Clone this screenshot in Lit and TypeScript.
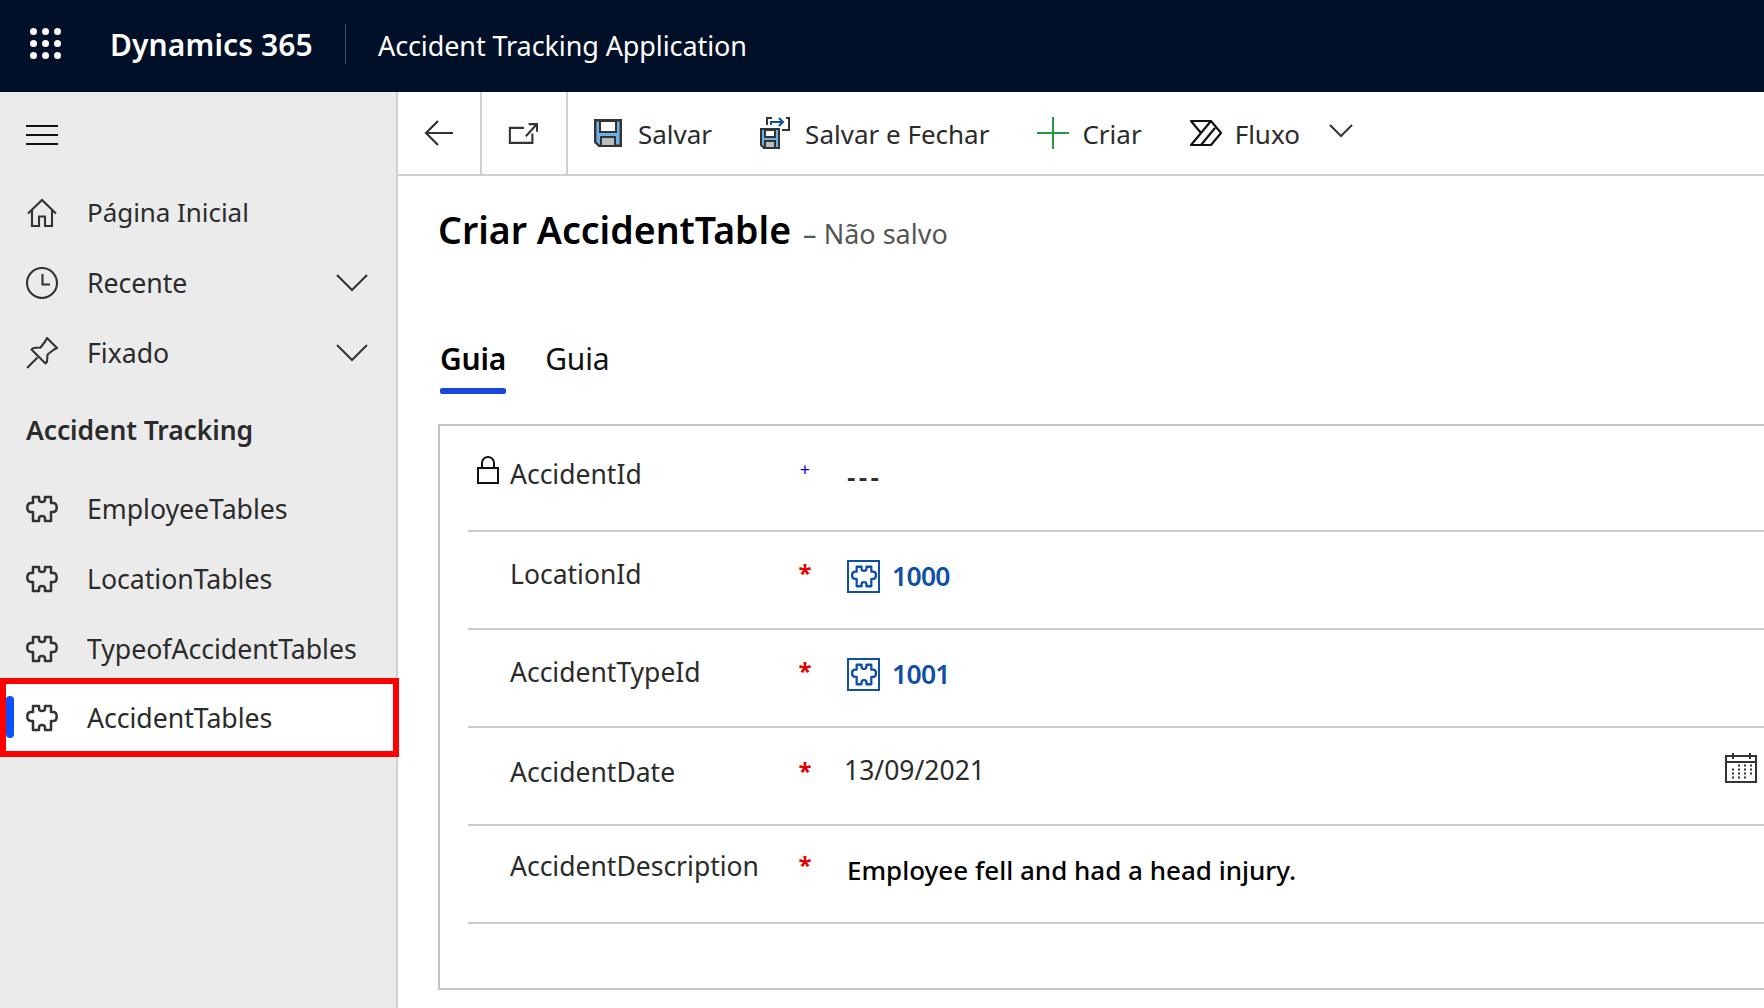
import { LitElement, html, css } from "lit";
import { customElement } from "lit/decorators.js";

const puzzle = (color = "#333", sw = 2.5) => html`<svg class="puzzle" viewBox="0 0 32 28" fill="none" stroke=${color} stroke-width=${sw} stroke-linejoin="round"><path d="M7 2h6v2.500c0 1.600 1.300 2.500 3 2.500s3-.9 3-2.500V2h6v6h2c2.300 0 3.700 1.500 3.700 4.400S29.300 17 27 17h-2v9h-6v-2.500c0-1.600-1.300-2.500-3-2.500s-3 .9-3 2.500V26H7v-9H5C2.700 17 1.300 15.500 1.300 12.600S2.700 8 5 8h2z"/></svg>`;

const navItems: [string, any, boolean, string][] = [
  ["Página Inicial", html`<svg class="ic" viewBox="0 0 32 30" fill="none" stroke="#333" stroke-width="2.100"><path d="M2 15.500 16 2l14 13.500M6 12v16h7v-9.500h6V28h7V12"/></svg>`, false, "tight"],
  ["Recente", html`<svg class="ic" viewBox="0 0 32 32" fill="none" stroke="#333" stroke-width="2.100"><circle cx="16" cy="16" r="15"/><path d="M16.500 7v10.500H24"/></svg>`, true, ""],
  ["Fixado", html`<svg class="ic" viewBox="0 0 32 32" fill="none" stroke="#333" stroke-width="2.100" stroke-linejoin="round"><path d="M1 31 11.500 20.500M21 1l10 10-3 1.500-6.500 5-.5 7-1.500 2-14-14 2-1.500 7-.5 5-6.500z"/></svg>`, true, ""],
];
const chevron = html`<svg class="chev" viewBox="0 0 32 18" fill="none" stroke="#333" stroke-width="2"><path d="M1 1l15 15L31 1"/></svg>`;
const tables = ["EmployeeTables", "LocationTables", "TypeofAccidentTables"];

const lookup = (v: string) => html`<span class="lk"><span class="lkbox">${puzzle("#0f4fa8", 2.8)}</span><span class="lktext">${v}</span></span>`;

@customElement("app-root")
export class AppRoot extends LitElement {
  static styles = css`
    :host { display: block; width: 1764px; height: 1008px; overflow: hidden; background: #fff; font-family: "Noto Sans", "Open Sans", sans-serif; color: #2b2b2b; }
    .page { display: grid; grid-template-rows: 92px 916px; height: 1008px; }
    .top { background: #001029; color: #fff; display: flex; align-items: center; padding-left: 30px; }
    .waffle { display: grid; grid-template-columns: repeat(3, 7px); gap: 5px; width: 31px; margin-top: -5px; }
    .waffle i { width: 7px; height: 7px; border-radius: 50%; background: #fff; }
    .brand { font-size: 30px; font-weight: 600; margin-left: 49px; width: 235px; white-space: nowrap; letter-spacing: .1px; margin-top: -3px; }
    .vsep { width: 1px; height: 40px; background: #47536a; margin: -4px 32px 0 0; }
    .app { font-size: 27px; white-space: nowrap; margin-top: -1px; letter-spacing: -.1px; }
    .body { display: grid; grid-template-columns: 398px 1fr; min-height: 0; }
    .side { background: #ebebeb; border-right: 2px solid #d0d0d0; box-sizing: border-box; position: relative; }
    .burger { padding: 33px 0 0 26px; height: 44px; box-sizing: content-box; }
    .burger i { display: block; width: 32px; height: 2px; background: #111; margin-bottom: 7px; }
    .item { display: flex; align-items: center; height: 70px; padding-left: 26px; font-size: 26.7px; white-space: nowrap; letter-spacing: -.05px; }
    .item.tight { font-size: 26px; }
    .ic { width: 32px; height: 32px; flex: none; }
    .puzzle { width: 32px; height: 28px; flex: none; display: block; }
    .label { margin-left: 29px; flex: 1; margin-top: -2px; }
    .chev { width: 32px; height: 18px; margin-right: 28px; flex: none; }
    .section { font-size: 26.5px; font-weight: 600; padding-left: 26px; height: 71px; line-height: 71px; margin-top: 7px; letter-spacing: -.1px; white-space: nowrap; }
    .first { margin-top: 9px; }
    .gapped { margin-top: 8px; }
    .active { position: relative; background: #fff; outline: 6px solid #ff0000; outline-offset: -6px; height: 79px; margin-top: -6px; width: 399px; box-sizing: border-box; }
    .active .label { margin-top: 0; }
    .active::before { content: ""; position: absolute; left: 6px; top: 18px; width: 8px; height: 42px; border-radius: 4px; background: #0b4fff; }
    .main { min-width: 0; }
    .bar { height: 84px; border-bottom: 2px solid #d0d0d0; box-sizing: border-box; display: flex; align-items: stretch; font-size: 26px; }
    .cell { width: 84px; box-sizing: border-box; border-right: 2px solid #d0d0d0; display: flex; align-items: center; justify-content: center; flex: none; }
    .cell.wide { width: 86px; padding-right: 2px; }
    .cmd { display: flex; align-items: center; white-space: nowrap; margin-left: 48px; }
    .cmd span { margin-top: 2px; margin-left: 13px; }
    .cmd.save { margin-left: 26px; }
    .cmd.save span { margin-left: 16px; }
    .cmd.close span { margin-left: 15px; }
    .cmd.more { margin-left: 29px; padding-bottom: 4px; }
    .head { padding: 0 0 0 40px; }
    h1 { margin: 0; font-size: 37.5px; font-weight: 600; color: #000; height: 108px; padding-top: 28px; box-sizing: border-box; display: flex; align-items: baseline; white-space: nowrap; }
    h1 small { font-size: 27px; font-weight: 400; color: #555; margin-left: 12px; }
    .tabs { display: flex; gap: 39px; height: 59px; color: #111; font-size: 30px; margin: 52px 0 0 2px; }
    .tab { height: 58px; box-sizing: border-box; padding-top: 2px; position: relative; letter-spacing: -.2px; }
    .tab.on { font-weight: 600; color: #000; }
    .tab.on::after { content: ""; position: absolute; left: 0; right: 0; bottom: 0; height: 6px; border-radius: 2px; background: #1a47dc; }
    .box { margin: 29px 0 0 0; border: 2px solid #c4c4c4; border-right: 0; height: 566px; box-sizing: border-box; padding-left: 28px; }
    .row { height: 98px; border-bottom: 2px solid #ccc; display: grid; grid-template-columns: 42px 337px 1fr; box-sizing: border-box; font-size: 26.5px; position: relative; }
    .row.h1r { height: 106px; }
    .lock { width: 22px; height: 28px; margin: 30px 0 0 9px; }
    .flabel { padding-top: var(--lt); line-height: 36px; white-space: nowrap; }
    .fval { position: relative; padding-top: var(--vt); display: flex; align-items: flex-start; line-height: 36px; white-space: nowrap; }
    .fval.date { margin-left: -3px; }
    .req { position: absolute; left: -51px; top: var(--st); color: #e60000; font-size: 24px; line-height: 30px; font-weight: 700; width: 18px; text-align: center; }
    .date .req { left: -48px; }
    .req.blue { color: #0000e0; font-size: 18px; line-height: 18px; font-weight: 400; }
    .dash { letter-spacing: 3.300px; font-weight: 600; }
    .lk { display: flex; align-items: center; gap: 12px; }
    .lkbox { width: 33px; height: 33px; box-sizing: border-box; border: 2px solid #0f4fa8; display: flex; align-items: center; justify-content: center; }
    .lkbox .puzzle { width: 26px; height: 23px; }
    .lktext { color: #0f4fa8; font-weight: 600; font-size: 26.5px; letter-spacing: -.7px; }
    .cal { position: absolute; right: 7px; top: 25px; width: 32px; height: 30px; }
    .desc { color: #000; font-weight: 500; font-size: 26px; }
  `;

  render() {
    const dots = Array.from({ length: 9 }, () => html`<i></i>`);
    return html`<div class="page">
      <header class="top">
        <div class="waffle">${dots}</div>
        <div class="brand">Dynamics 365</div>
        <div class="vsep"></div>
        <div class="app">Accident Tracking Application</div>
      </header>
      <div class="body">
        <aside class="side">
          <div class="burger"><i></i><i></i><i></i></div>
          <div class="first"></div>
          ${navItems.map(([t, i, c, k]) => html`<div class="item ${k}">${i}<span class="label">${t}</span>${c ? chevron : ""}</div>`)}
          <div class="section">Accident Tracking</div>
          <div class="gapped"></div>
          ${tables.map((t) => html`<div class="item">${puzzle()}<span class="label">${t}</span></div>`)}
          <div class="item active">${puzzle()}<span class="label">AccidentTables</span></div>
        </aside>
        <main class="main">
          <div class="bar">
            <div class="cell"><svg width="30" height="26" viewBox="0 0 30 26" fill="none" stroke="#333" stroke-width="2.200"><path d="M29 13H2M14 1 2 13l12 12"/></svg></div>
            <div class="cell wide"><svg width="30" height="23" viewBox="0 0 32 24" fill="none" stroke="#333" stroke-width="2.200"><path d="M17 6H2v16h24V12M19 15 30 3M22 2h9v8"/></svg></div>
            <div class="cmd save"><svg width="28" height="28" viewBox="0 0 28 28"><path d="M1.200 1.200h25.600v25.600H5l-3.800-3.800z" fill="#6cb0e8" stroke="#333" stroke-width="2.400"/><rect x="6" y="2" width="16" height="11" fill="#fff" stroke="#333" stroke-width="2"/><rect x="7" y="18" width="14" height="9" fill="#bbb" stroke="#333" stroke-width="2"/></svg><span>Salvar</span></div>
            <div class="cmd close"><svg width="30" height="32" viewBox="0 0 30 32" fill="none"><path d="M7 8V1h5M26 1h3v12h-7" stroke="#333" stroke-width="2"/><path d="M11 8V5h12M19 1l4 4-4 4" stroke="#0f4fa8" stroke-width="2"/><path d="M1 12h18v19H4l-3-3z" fill="#6cb0e8" stroke="#333" stroke-width="2"/><rect x="5" y="13" width="10" height="7" fill="#fff" stroke="#333" stroke-width="2"/><rect x="5" y="24" width="10" height="7" fill="#bbb" stroke="#333" stroke-width="2"/></svg><span>Salvar e Fechar</span></div>
            <div class="cmd"><svg width="32" height="32" viewBox="0 0 32 32" stroke="#1f9a3f" stroke-width="2"><path d="M16 0v32M0 16h32"/></svg><span>Criar</span></div>
            <div class="cmd"><svg width="32" height="26" viewBox="0 0 32 26" fill="none" stroke="#111" stroke-width="2.200" stroke-linejoin="round"><path d="M1 1h20l10 12-10 12H1l10-12zM11 13 21 1M11 25 25 8"/></svg><span>Fluxo</span></div>
            <div class="cmd more"><svg width="24" height="14" viewBox="0 0 24 14" fill="none" stroke="#333" stroke-width="2"><path d="M1 1l11 11L23 1"/></svg></div>
          </div>
          <div class="head">
            <h1>Criar AccidentTable<small>– Não salvo</small></h1>
            <nav class="tabs"><div class="tab on">Guia</div><div class="tab">Guia</div></nav>
            <section class="box">
              <div class="row h1r" style="--lt:30px;--vt:33px;--st:34px">
                <svg class="lock" viewBox="0 0 22 28" fill="none" stroke="#111" stroke-width="2"><rect x="1" y="12" width="20" height="15"/><path d="M5 12V7a6 6 0 0 1 12 0v5"/></svg>
                <div class="flabel">AccidentId</div>
                <div class="fval"><span class="req blue">+</span><span class="dash">---</span></div>
              </div>
              <div class="row" style="--lt:24px;--vt:26px;--st:26px">
                <div></div><div class="flabel">LocationId</div>
                <div class="fval"><span class="req">*</span>${lookup("1000")}</div>
              </div>
              <div class="row" style="--lt:24px;--vt:26px;--st:26px">
                <div></div><div class="flabel">AccidentTypeId</div>
                <div class="fval"><span class="req">*</span>${lookup("1001")}</div>
              </div>
              <div class="row" style="--lt:26px;--vt:24px;--st:28px">
                <div></div><div class="flabel">AccidentDate</div>
                <div class="fval date"><span class="req">*</span>13/09/2021</div>
                <svg class="cal" viewBox="0 0 32 30" fill="none" stroke="#333" stroke-width="2"><path d="M1 3h30v26H1zM1 9h30M8 0v6M25 0v6"/><path stroke-width="2" stroke-dasharray="2 4" d="M13 13h15M7 17h21M7 21h21M7 25h15" transform="translate(0 -.5)"/></svg>
              </div>
              <div class="row" style="--lt:22px;--vt:26px;--st:24px">
                <div></div><div class="flabel">AccidentDescription</div>
                <div class="fval desc"><span class="req">*</span>Employee fell and had a head injury.</div>
              </div>
            </section>
          </div>
        </main>
      </div>
    </div>`;
  }
}
